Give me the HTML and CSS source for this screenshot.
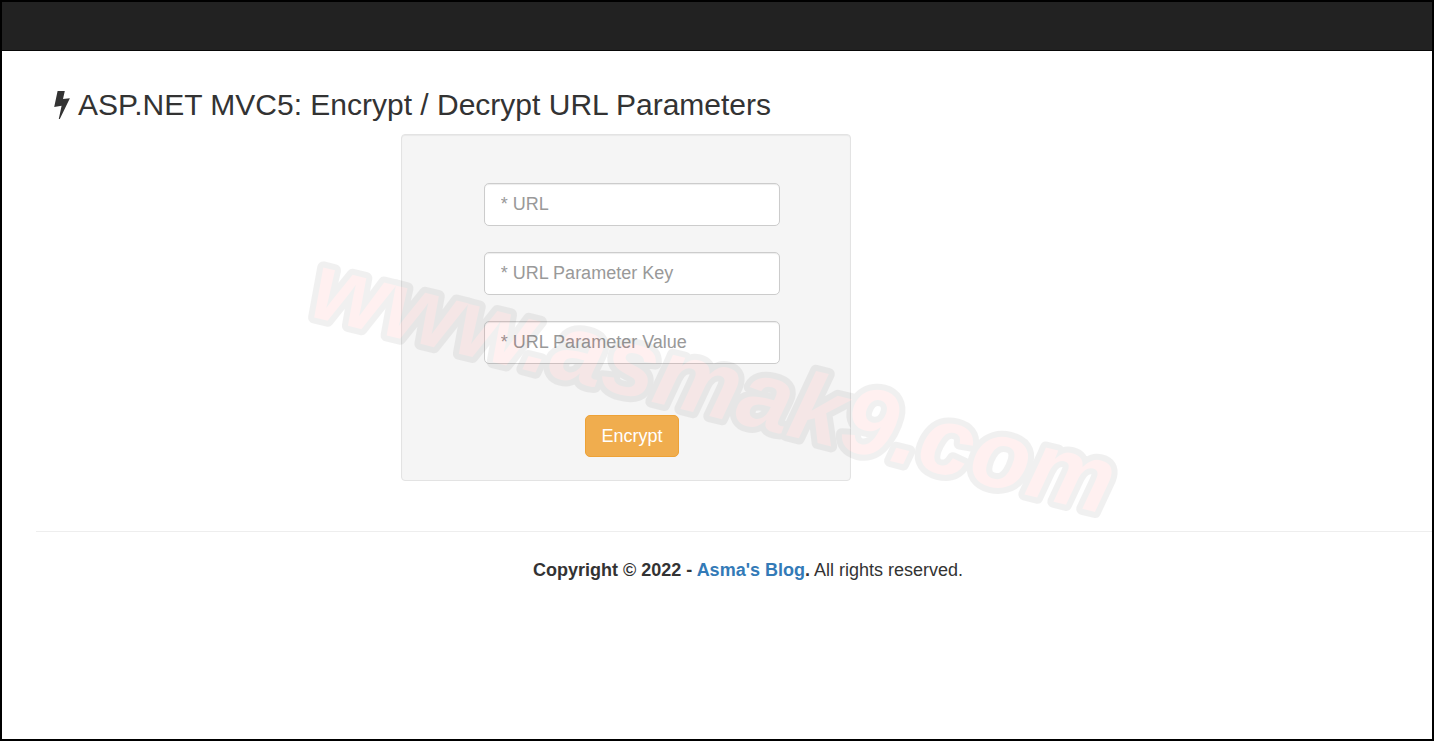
FILE: index.html
```html
<!DOCTYPE html>
<html lang="en">
<head>
  <meta charset="UTF-8">
  <meta name="viewport" content="width=device-width, initial-scale=1.0">
  <title>ASP.NET MVC5: Encrypt / Decrypt URL Parameters</title>
  <link rel="stylesheet" href="styles.css">
</head>
<body>
  <nav class="navbar"></nav>

  <main class="body-content">
    <h2 class="page-title">
      <svg class="icon-flash" viewBox="0 0 16 28" aria-hidden="true">
        <path d="M3.6 0H10.8L9 8L15.9 7.2L5.8 28H4.8L7.6 14.8L0.2 16Z"/>
      </svg>
      ASP.NET MVC5: Encrypt / Decrypt URL Parameters
    </h2>

    <div class="form-row">
      <form class="well">
        <input class="form-control" type="text" placeholder="* URL" aria-label="URL">
        <input class="form-control" type="text" placeholder="* URL Parameter Key" aria-label="URL Parameter Key">
        <input class="form-control" type="text" placeholder="* URL Parameter Value" aria-label="URL Parameter Value">
        <button class="btn-warning" type="button">Encrypt</button>
      </form>
    </div>

    <hr>

    <footer>
      <p><strong>Copyright &copy; 2022 - <a href="#">Asma's Blog</a>.</strong> All rights reserved.</p>
    </footer>
  </main>

  <svg class="watermark" viewBox="0 0 840 270" aria-hidden="true">
    <text x="420" y="164" text-anchor="middle" transform="rotate(14 420 135)">www.asmak9.com</text>
  </svg>
</body>
</html>
```
FILE: styles.css
```css
* {
  box-sizing: border-box;
}

body {
  position: relative;
  min-height: 100vh;
  margin: 0;
  border: 2px solid #000;
  background-color: #fff;
  color: #333;
  font-family: "Liberation Sans", Arial, sans-serif;
  font-size: 18px;
  line-height: 26px;
  overflow-x: hidden;
}

.navbar {
  height: 49px;
  background-color: #222;
  border-bottom: 1px solid #080808;
}

.body-content {
  padding-left: 34px;
}

.page-title {
  display: flex;
  align-items: center;
  gap: 8px;
  margin: 0;
  padding: 36px 0 12px 18px;
  font-size: 30px;
  font-weight: 400;
  line-height: 35px;
}

.icon-flash {
  width: 16px;
  height: 28px;
  fill: #333;
}

.form-row {
  display: grid;
  grid-template-columns: 365fr 450fr 581fr;
}

.well {
  grid-column: 2;
  display: flex;
  flex-direction: column;
  align-items: center;
  gap: 26px;
  padding: 48px 0 23px 12px;
  background-color: #f5f5f5;
  border: 1px solid #e3e3e3;
  border-radius: 4px;
  box-shadow: inset 0 1px 1px rgba(0, 0, 0, 0.05);
}

.form-control {
  width: 68%;
  height: 43px;
  padding: 8px 16px;
  color: #555;
  font: inherit;
  background-color: #fff;
  border: 1px solid #ccc;
  border-radius: 5px;
  box-shadow: inset 0 1px 1px rgba(0, 0, 0, 0.075);
}

.form-control::placeholder {
  color: #999;
  opacity: 1;
}

.btn-warning {
  height: 42px;
  margin-top: 25px;
  padding: 0 15px;
  color: #fff;
  font: inherit;
  background-color: #f0ad4e;
  border: 1px solid #eea236;
  border-radius: 5px;
  cursor: pointer;
}

hr {
  margin: 50px 0 25px;
  border: 0;
  border-top: 1px solid #eee;
}

footer {
  padding-left: 28px;
  text-align: center;
}

footer p {
  margin: 0;
}

footer a {
  color: #337ab7;
  text-decoration: none;
}

/* Site name laid diagonally over the page */
.watermark {
  position: absolute;
  top: 250px;
  left: 50%;
  width: 840px;
  margin-left: -424px;
  overflow: visible;
  opacity: 0.055;
  pointer-events: none;
}

.watermark text {
  font-size: 96px;
  font-style: italic;
  font-weight: 700;
  fill: #f00;
  stroke: #000;
  stroke-width: 12px;
  stroke-linejoin: round;
  paint-order: stroke fill;
}
```
